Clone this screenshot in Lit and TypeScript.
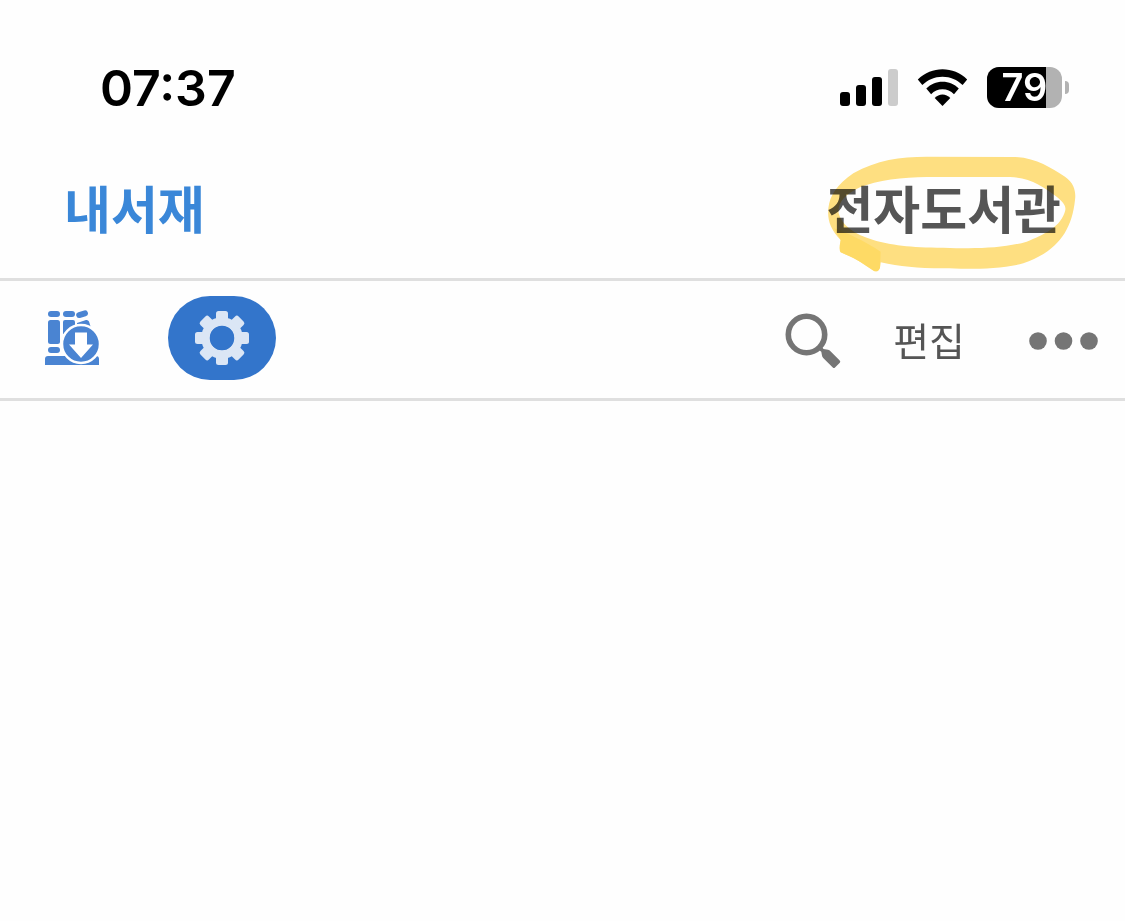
import { LitElement, html, css, svg } from "lit";
import { customElement, property } from "lit/decorators.js";

@customElement("status-bar")
class StatusBar extends LitElement {
  @property() time = "07:37";
  @property({ type: Number }) battery = 79;

  static styles = css`
    :host {
      display: flex;
      align-items: center;
      justify-content: space-between;
      padding: 56px 56px 24px 100px;
      font-family: "Inter", "Liberation Sans", sans-serif;
      font-weight: 600;
      color: #000;
    }
    .time {
      font-size: 50px;
      line-height: 64px;
    }
    .status {
      display: flex;
      align-items: center;
      padding-bottom: 1px;
    }
    .signal {
      margin-right: 19px;
    }
    .wifi {
      margin-right: 18px;
    }
    svg {
      display: block;
    }
    .battery {
      position: relative;
      display: flex;
      justify-content: center;
      width: 75px;
      border-radius: 12px;
      background: #b2b2b2;
      color: #fff;
      font-size: 38px;
      line-height: 41px;
    }
    .level {
      position: absolute;
      inset: 0 auto 0 0;
      border-radius: 12px 0 0 12px;
      background: #000;
    }
    .percent {
      position: relative;
    }
    .cap {
      width: 4px;
      height: 13px;
      margin-left: 3px;
      border-radius: 0 5px 5px 0;
      background: #b2b2b2;
    }
  `;

  render() {
    return html`
      <span class="time">${this.time}</span>
      <div class="status">
        <svg class="signal" width="58" height="37" viewBox="0 0 58 37" aria-hidden="true">
          <rect x="0" y="23" width="10" height="14" rx="3" />
          <rect x="16" y="16" width="10" height="21" rx="3" />
          <rect x="32" y="8" width="10" height="29" rx="3" />
          <rect x="48" y="0" width="10" height="37" rx="3" fill="#ccc" />
        </svg>
        <svg class="wifi" width="52" height="38" viewBox="0 0 52 38" aria-hidden="true">
          <path d="M.8 10.400C8 3.700 16.500.200 25.500.200s18 3.500 24.700 10.200L45.600 16C40 10.700 33.500 7.700 25.500 7.700S11 10.700 5.300 16Z" />
          <path d="M9.300 19.600C14 15 19 12.800 25.500 12.800s11.800 2.200 16.300 6.800L37 25.200C33.800 22 30 20.300 25.500 20.300S17.200 22 14.100 25.200Z" />
          <path d="M17.700 29C20 26.800 22.500 25.600 25.500 25.600s5.500 1.200 7.800 3.400L25.500 37Z" />
        </svg>
        <div class="battery">
          <span class="level" style="width:${this.battery}%"></span>
          <span class="percent">${this.battery}</span>
        </div>
        <span class="cap"></span>
      </div>
    `;
  }
}

@customElement("library-tabs")
class LibraryTabs extends LitElement {
  static styles = css`
    :host {
      display: flex;
      align-items: center;
      justify-content: space-between;
      padding: 26px 64px 34px;
      border-bottom: 3px solid #dfdfdf;
      font-family: "Noto Sans CJK KR", sans-serif;
      font-size: 51px;
      line-height: 74px;
      font-weight: 700;
    }
    a {
      position: relative;
      color: #555;
      text-decoration: none;
    }
    .current {
      color: #3a87d8;
    }
    .marker {
      position: absolute;
      left: -16px;
      top: -25px;
      width: 280px;
      height: 140px;
      mix-blend-mode: multiply;
      pointer-events: none;
    }
  `;

  render() {
    return html`
      <a class="current" href="#shelf" aria-current="page">내서재</a>
      <a href="#elibrary">전자도서관
        <svg class="marker" viewBox="0 0 840 420" aria-hidden="true">
          <path
            fill="#ffe082"
            fill-rule="evenodd"
            d="M350 35L610 36C680 38 720 68 765 95C795 115 798 145 795 165C785 260 740 320 640 355C570 374 470 372 400 370C320 370 270 364 212 352L210 368Q205 382 192 378L150 350Q130 338 92 322Q86 315 92 285C60 250 52 225 55 190C60 150 80 120 130 85C200 45 270 35 350 35ZM350 96C280 96 200 106 150 127C100 150 82 178 86 205C95 240 130 268 190 285C240 300 300 308 400 308C500 312 580 310 650 290C700 270 755 245 766 195C768 182 760 172 740 155C700 125 660 98 600 96Z"
          />
          <path fill="#ffd95e" opacity=".8" d="M72 250C110 262 165 290 212 320L210 368Q205 382 192 378L150 350Q130 338 92 322Q86 315 92 285Z" />
        </svg>
      </a>
    `;
  }
}

@customElement("shelf-toolbar")
class ShelfToolbar extends LitElement {
  static styles = css`
    :host {
      display: flex;
      align-items: center;
      justify-content: space-between;
      padding: 15px 26px 18px 44px;
      border-bottom: 3px solid #dfdfdf;
    }
    .group {
      display: flex;
      align-items: center;
    }
    .start {
      gap: 68px;
    }
    .end {
      padding-top: 6px;
    }
    button {
      display: flex;
      align-items: center;
      justify-content: center;
      margin: 0;
      padding: 0;
      border: 0;
      background: none;
      color: #757575;
    }
    svg {
      display: block;
    }
    .settings {
      width: 108px;
      height: 84px;
      border-radius: 42px;
      background: #3375cb;
    }
    .edit {
      margin: 0 62px 0 52px;
      padding-bottom: 4px;
      font: 400 39px/58px "Noto Sans CJK KR", sans-serif;
      color: #555;
    }
  `;

  private tooth(angle: number) {
    return svg`<rect x="-6" y="-27" width="12" height="14" rx="2.500" transform="rotate(${angle})" />`;
  }

  render() {
    return html`
      <div class="group start">
        <button aria-label="다운로드">
          <svg width="56" height="56" viewBox="0 0 56 56" fill="#4a84d2">
            <rect x="4" y="1" width="12" height="6" rx="3" />
            <rect x="19" y="1" width="12" height="6" rx="3" />
            <rect x="32" y="1.200" width="12" height="6" rx="3" transform="rotate(-16 38 4)" />
            <rect x="4" y="10" width="12" height="24" rx="2.500" />
            <rect x="4" y="37" width="12" height="6" rx="3" />
            <path d="M19 12q0-2 2-2h8q2 0 2 2v12H19ZM33 13l9-3q2-.5 3 1.500L47 18H33Z" />
            <path d="M1 49q0-3 3-3h48q3 0 3 3v6H1Z" />
            <circle cx="37" cy="34" r="19" stroke="#fff" stroke-width="2.500" />
            <path fill="#fff" d="M31 22.500h12v12h6L37 48 25 34.500h6Z" />
          </svg>
        </button>
        <button class="settings" aria-label="설정">
          <svg width="54" height="54" viewBox="-27 -27 54 54" fill="#dbe6f5">
            ${[0, 45, 90, 135, 180, 225, 270, 315].map((a) => this.tooth(a))}
            <circle r="16.500" fill="none" stroke="#dbe6f5" stroke-width="8.500" />
            <circle r="12" fill="#3375cb" />
          </svg>
        </button>
      </div>
      <div class="group end">
        <button aria-label="검색">
          <svg width="56" height="56" viewBox="0 0 56 56">
            <circle cx="21.500" cy="21.500" r="18.200" fill="none" stroke="currentColor" stroke-width="5.600" />
            <path fill="currentColor" d="M32 35.500 35.500 32 38.500 36 43 36.800Q44.500 37.200 45.500 38.200L54.500 47.200Q56 48.500 54.800 49.800L50 54.500Q49 55.500 47.800 54.500L38.200 45Q37 43.500 36.800 41.500L36.300 38.800Z" />
          </svg>
        </button>
        <button class="edit">편집</button>
        <button aria-label="더보기">
          <svg width="72" height="20" viewBox="0 0 72 20" fill="currentColor">
            <circle cx="11" cy="10" r="8.800" />
            <circle cx="36.500" cy="10" r="8.800" />
            <circle cx="62" cy="10" r="8.800" />
          </svg>
        </button>
      </div>
    `;
  }
}

@customElement("app-root")
class AppRoot extends LitElement {
  static styles = css`
    :host {
      display: block;
      min-height: 100vh;
      background: #fefefe;
    }
  `;

  render() {
    return html`
      <status-bar></status-bar>
      <library-tabs></library-tabs>
      <shelf-toolbar></shelf-toolbar>
      <main></main>
    `;
  }
}
